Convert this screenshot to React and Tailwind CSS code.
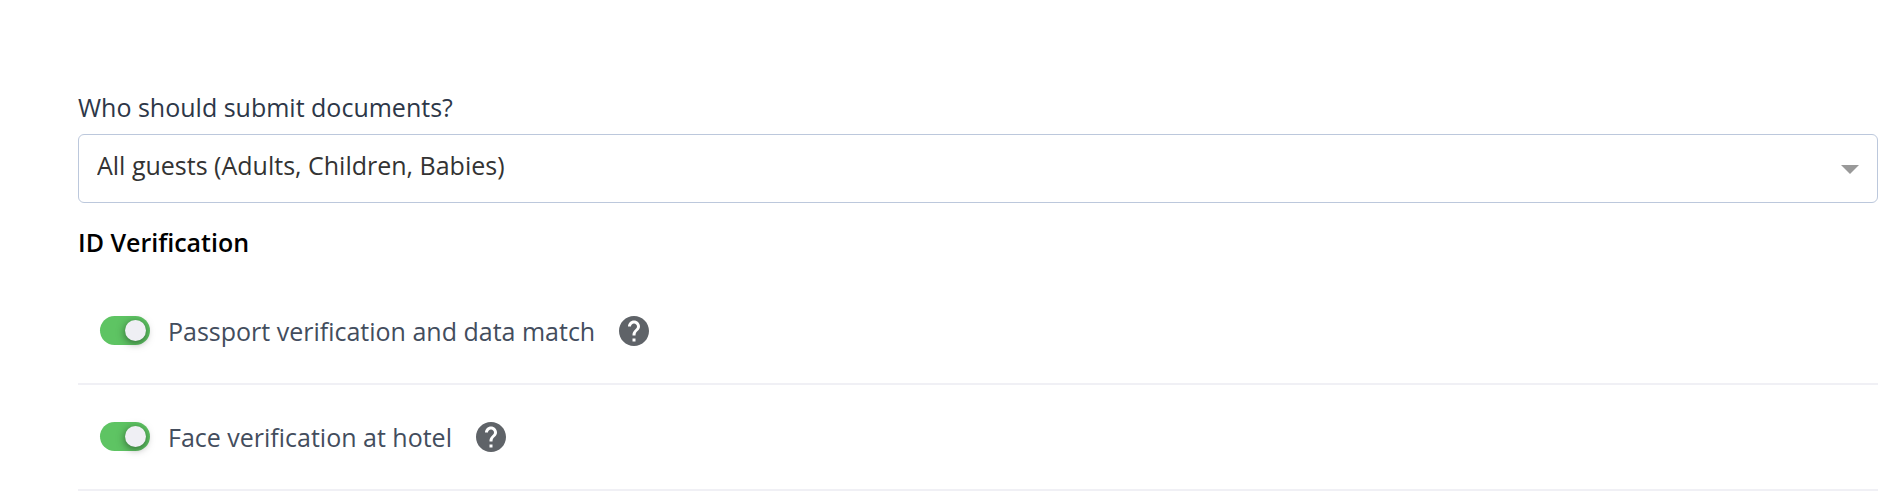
import { useState } from "react";
import { MdHelp } from "react-icons/md";

const guestOptions = [
  "All guests (Adults, Children, Babies)",
  "Adults and Children",
  "Adults only",
];

const App = () => {
  const [guests, setGuests] = useState(guestOptions[0]);
  const [passport, setPassport] = useState(true);
  const [face, setFace] = useState(true);

  return (
    <main className="bg-white pt-22 pr-3.5 pl-[78px] font-['Open_Sans',sans-serif] text-[25px] leading-[38px]">
      <label htmlFor="guests" className="block text-[#2d3748]">
        Who should submit documents?
      </label>
      <div className="relative mt-2">
        <select
          id="guests"
          value={guests}
          onChange={(e) => setGuests(e.target.value)}
          className="block h-[69px] w-full appearance-none rounded-md border border-[#bcc8dc] bg-white px-[18px] pb-2 text-[#333333]"
        >
          {guestOptions.map((option) => (
            <option key={option}>{option}</option>
          ))}
        </select>
        <svg viewBox="0 0 18 9" className="pointer-events-none absolute top-[31px] right-[19px] h-[9px] w-[18px] fill-[#999999]" aria-hidden="true">
          <path d="M0 0h18L9 9z" />
        </svg>
      </div>

      <h2 className="mt-5 mb-[18px] font-semibold text-black">ID Verification</h2>

      <ToggleRow id="passport" label="Passport verification and data match" checked={passport} onChange={setPassport} />
      <ToggleRow id="face" label="Face verification at hotel" checked={face} onChange={setFace} />
    </main>
  );
};

const ToggleRow = ({ id, label, checked, onChange }) => (
  <div className="flex h-[106px] items-center border-b-2 border-[#f0f0f5] pb-px pl-[22px]">
    <input
      id={id}
      type="checkbox"
      role="switch"
      checked={checked}
      onChange={(e) => onChange(e.target.checked)}
      className="h-[29px] w-[50px] shrink-0 cursor-pointer appearance-none rounded-full bg-gray-300 p-1 before:block before:size-[21px] before:rounded-full before:bg-[#efeff4] before:shadow-[0_2px_8px_rgba(0,0,0,0.5)] checked:bg-[#5ec463] checked:before:ml-auto"
    />
    <label htmlFor={id} className="ml-[18px] text-[#434d5d]">
      {label}
    </label>
    <button type="button" aria-label={`About ${label}`} className="ml-[21px] text-[#5f6368]">
      <MdHelp className="size-9" />
    </button>
  </div>
);

export default App;
